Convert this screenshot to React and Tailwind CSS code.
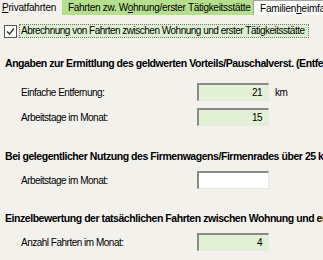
const Field = ({ label, value, unit, green = true }) => (
  <div className="flex items-center h-[20px] pl-[21px]">
    <span className="w-[176px]">{label}</span>
    <div
      className={`w-[72px] h-[18px] border-t-2 border-l-2 border-t-[#8a8a8a] border-l-[#8a8a8a] border-b border-r border-b-[#e8e8e8] border-r-[#e8e8e8] text-right pr-[6px] leading-[15px] ${
        green ? 'bg-[#e2f0d6]' : 'bg-white'
      }`}
    >
      {value}
    </div>
    {unit && <span className="ml-[6px]">{unit}</span>}
  </div>
);

const Heading = ({ children }) => (
  <div className="pl-[5px] font-bold whitespace-nowrap h-[16px] leading-[16px] tracking-[-0.45px] text-[10.5px]">{children}</div>
);

const App = () => {
  return (
    <div
      className="w-[323px] h-[260px] bg-[#f3f1ec] overflow-hidden text-[10px] tracking-[-0.5px] text-black"
      style={{ fontFamily: '"Liberation Sans", Arial, sans-serif' }}
    >
      <div className="flex h-[15px] whitespace-nowrap leading-[15px]">
        <div className="w-[62px] pl-[2px] bg-[#f3f1ec] tracking-[-0.2px]">
          <span className="underline">P</span>rivatfahrten
        </div>
        <div className="w-[191px] bg-[#b5df8f] pl-[6px] tracking-[-0.3px]">
          Fahrten zw. W<span className="underline">o</span>hnung/erster Tätigkeitsstätte
        </div>
        <div className="flex-1 bg-[#fbfbfa] border-l border-t border-[#a0a0a0] pl-[6px] overflow-hidden tracking-[-0.2px]">
          Familien<span className="underline">h</span>eimfahrten
        </div>
      </div>

      <div className="flex items-center mt-[9px] pl-[4px] h-[14px]">
        <div className="w-[13px] h-[13px] border border-[#555] bg-white flex items-center justify-center">
          <svg width="9" height="9" viewBox="0 0 9 9">
            <path d="M1 4.5 L3.5 7 L8 1.5" fill="none" stroke="#333" strokeWidth="1.3" />
          </svg>
        </div>
        <div className="ml-[2px] bg-[#dcefd0] border border-dotted border-[#777] pl-[1px] pr-[3px] leading-[12px] whitespace-nowrap">
          Abrechnung von Fahrten zwischen Wohnung und erster Tätigkeitsstätte
        </div>
      </div>

      <div className="mt-[17px]">
        <Heading>Angaben zur Ermittlung des geldwerten Vorteils/Pauschalverst. (Entfernung)</Heading>
      </div>
      <div className="mt-[11px] flex flex-col gap-[5px]">
        <Field label="Einfache Entfernung:" value="21" unit="km" />
        <Field label="Arbeitstage im Monat:" value="15" />
      </div>

      <div className="mt-[21px]">
        <Heading>Bei gelegentlicher Nutzung des Firmenwagens/Firmenrades über 25 km</Heading>
      </div>
      <div className="mt-[6px]">
        <Field label="Arbeitstage im Monat:" value="" green={false} />
      </div>

      <div className="mt-[20px]">
        <Heading>Einzelbewertung der tatsächlichen Fahrten zwischen Wohnung und erster Tätigkeitsstätte</Heading>
      </div>
      <div className="mt-[6px]">
        <Field label="Anzahl Fahrten im Monat:" value="4" />
      </div>
    </div>
  );
};

export default App;
